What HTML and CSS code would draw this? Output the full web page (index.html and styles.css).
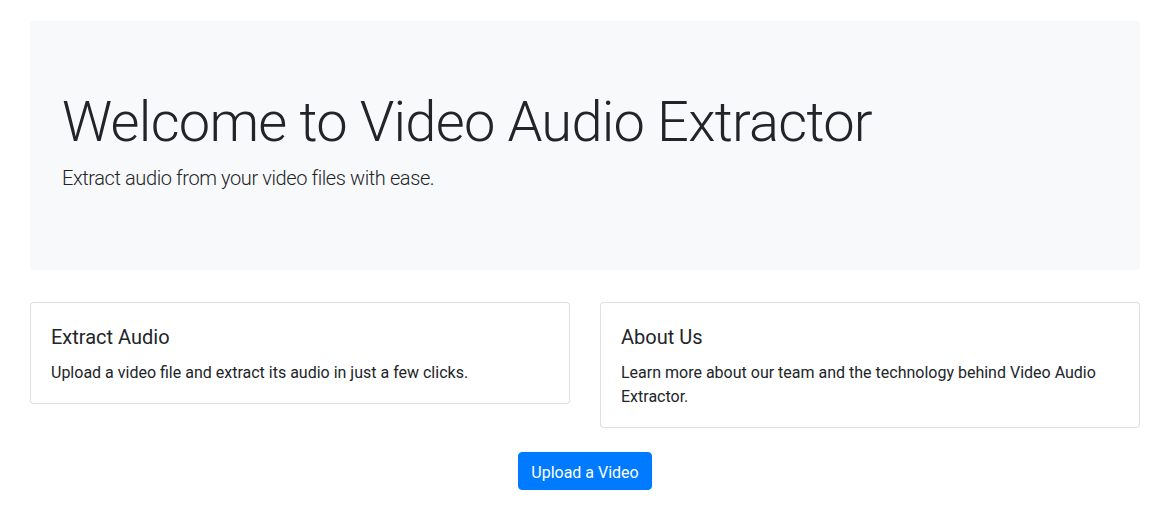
FILE: index.html
```html
<!DOCTYPE html>
<html>
<head>
  <link rel="stylesheet" href="styles.css">
</head>
<body>
  <div class="container">
    <div class="jumbotron">
      <h1 class="display">Welcome to Video Audio Extractor</h1>
      <p class="lead">Extract audio from your video files with ease.</p>
    </div>

    <div class="row">
      <div class="card">
        <div class="card-body">
          <h5 class="card-title">Extract Audio</h5>
          <p class="card-text">Upload a video file and extract its audio in just a few clicks.</p>
        </div>
      </div>
      <div class="card">
        <div class="card-body">
          <h5 class="card-title">About Us</h5>
          <p class="card-text">Learn more about our team and the technology behind Video Audio Extractor.</p>
        </div>
      </div>
    </div>

    <div class="actions">
      <button class="btn-primary">Upload a Video</button>
    </div>
  </div>
</body>
</html>
```
FILE: styles.css
```css
body {
  margin: 0;
  font-family: Roboto, "Liberation Sans", sans-serif;
  font-size: 16px;
  line-height: 1.5;
  color: #212529;
  background-color: #fff;
}

.container {
  width: 1110px;
  margin: 21px 0 0 30px;
}

.jumbotron {
  background-color: #f8f9fa;
  border-radius: 4px;
  padding: 68px 32px 60px;
  margin-bottom: 32px;
}

.jumbotron .display {
  margin: 0 0 7px;
  font-size: 56px;
  font-weight: 300;
  line-height: 1.2;
  letter-spacing: -0.75px;
}

.jumbotron .lead {
  margin: 0 0 17px;
  font-size: 20px;
  font-weight: 300;
  line-height: 1.5;
  letter-spacing: -0.4px;
}

.row {
  display: grid;
  grid-template-columns: 1fr 1fr;
  gap: 30px;
  align-items: start;
}

.card {
  border: 1px solid rgba(0, 0, 0, 0.125);
  border-radius: 4px;
  background-color: #fff;
}

.card-body {
  padding: 22px 20px 18px;
}

.card-title {
  margin: 0 0 12px;
  font-size: 20px;
  font-weight: 400;
  line-height: 1.2;
}

.card-text {
  margin: 0;
}

.actions {
  margin-top: 24px;
  text-align: center;
}

.btn-primary {
  font-family: inherit;
  font-size: 16px;
  line-height: 1.5;
  padding: 8px 12px 4px;
  color: #fff;
  background-color: #007bff;
  border: 1px solid #007bff;
  border-radius: 4px;
  cursor: pointer;
}
```
